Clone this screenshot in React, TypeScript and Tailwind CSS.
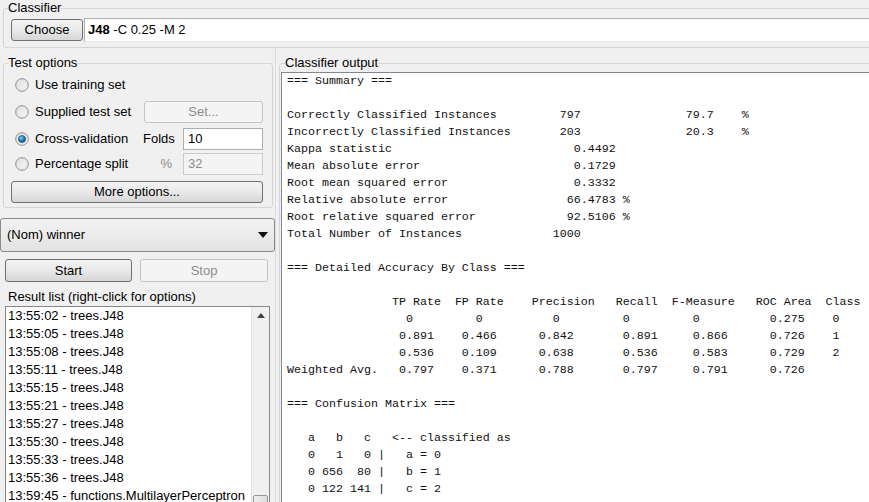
import React from "react";

const sans = "font-['Liberation_Sans',Arial,sans-serif]";

function col(parts: [number, string][]) {
  let s = "";
  for (const [c, t] of parts) s = s.padEnd(c, " ") + t;
  return s;
}

const outputLines = [
  "=== Summary ===",
  "",
  col([[0, "Correctly Classified Instances"], [39, "797"], [57, "79.7"], [65, "%"]]),
  col([[0, "Incorrectly Classified Instances"], [39, "203"], [57, "20.3"], [65, "%"]]),
  col([[0, "Kappa statistic"], [41, "0.4492"]]),
  col([[0, "Mean absolute error"], [41, "0.1729"]]),
  col([[0, "Root mean squared error"], [41, "0.3332"]]),
  col([[0, "Relative absolute error"], [40, "66.4783 %"]]),
  col([[0, "Root relative squared error"], [40, "92.5106 %"]]),
  col([[0, "Total Number of Instances"], [38, "1000"]]),
  "",
  "=== Detailed Accuracy By Class ===",
  "",
  col([[15, "TP Rate"], [24, "FP Rate"], [35, "Precision"], [47, "Recall"], [55, "F-Measure"], [67, "ROC Area"], [77, "Class"]]),
  col([[17, "0"], [27, "0"], [38, "0"], [48, "0"], [58, "0"], [69, "0.275"], [78, "0"]]),
  col([[16, "0.891"], [25, "0.466"], [36, "0.842"], [48, "0.891"], [58, "0.866"], [69, "0.726"], [78, "1"]]),
  col([[16, "0.536"], [25, "0.109"], [36, "0.638"], [48, "0.536"], [58, "0.583"], [69, "0.729"], [78, "2"]]),
  col([[0, "Weighted Avg."], [16, "0.797"], [25, "0.371"], [36, "0.788"], [48, "0.797"], [58, "0.791"], [69, "0.726"]]),
  "",
  "=== Confusion Matrix ===",
  "",
  "   a   b   c   <-- classified as",
  "   0   1   0 |   a = 0",
  "   0 656  80 |   b = 1",
  "   0 122 141 |   c = 2",
];

const results = [
  "13:55:02 - trees.J48",
  "13:55:05 - trees.J48",
  "13:55:08 - trees.J48",
  "13:55:11 - trees.J48",
  "13:55:15 - trees.J48",
  "13:55:21 - trees.J48",
  "13:55:27 - trees.J48",
  "13:55:30 - trees.J48",
  "13:55:33 - trees.J48",
  "13:55:36 - trees.J48",
  "13:59:45 - functions.MultilayerPerceptron",
];

function Radio({ checked }: { checked?: boolean }) {
  return (
    <svg width="14" height="14" viewBox="0 0 14 14" className="shrink-0">
      <defs>
        <linearGradient id="rb" x1="0" y1="0" x2="1" y2="1">
          <stop offset="0" stopColor="#dcdcdc" />
          <stop offset="1" stopColor="#fbfbfb" />
        </linearGradient>
        <radialGradient id="rd" cx="0.4" cy="0.35" r="0.7">
          <stop offset="0" stopColor="#8fd3f5" />
          <stop offset="0.45" stopColor="#2a8ac4" />
          <stop offset="1" stopColor="#0e4670" />
        </radialGradient>
      </defs>
      <circle cx="7" cy="7" r="6.3" fill="url(#rb)" stroke="#8e8f8f" strokeWidth="1" />
      <circle cx="7" cy="7" r="4.6" fill="none" stroke="#e6e6e6" strokeWidth="1" />
      {checked && <circle cx="7" cy="7" r="3.6" fill="url(#rd)" stroke="#1f4f73" strokeWidth="0.6" />}
    </svg>
  );
}

function Button({ children, disabled, className = "" }: { children: React.ReactNode; disabled?: boolean; className?: string }) {
  return (
    <div
      className={
        "flex items-center justify-center rounded-[3px] border " +
        (disabled
          ? "border-[#c2c5c7] bg-[#f4f4f4] text-[#8d8d8d] "
          : "border-[#707070] bg-linear-to-b from-[#f3f3f3] via-[#e9e9e9] to-[#d6d6d6] text-black ") +
        className
      }
    >
      {children}
    </div>
  );
}

export default function App() {
  return (
    <div className={`flex h-[502px] w-[869px] flex-col overflow-hidden bg-[#f0f0f0] text-[13px] text-black ${sans}`}>
      {/* Classifier */}
      <fieldset className="ml-[3px] mr-[-12px] min-w-0 rounded-[3px] border border-[#d5d5d5]">
        <legend className="ml-[4px] leading-[16px]">Classifier</legend>
        <div className="flex h-[24px] items-center gap-[1px] pb-0 pl-[7px] pt-0 mt-[2px] mb-[5px]">
          <Button className="h-[22px] w-[72px]">Choose</Button>
          <div className="flex h-[24px] flex-1 items-center border border-[#abadb3] border-b-[#e3e9ef] bg-white pl-[3px]">
            <span className="font-bold">J48</span>
            <span>&nbsp;-C 0.25 -M 2</span>
          </div>
        </div>
      </fieldset>

      <div className="flex flex-1">
        {/* Left column */}
        <div className="flex w-[275px] shrink-0 flex-col">
          <fieldset className="ml-[3px] mr-[2px] mt-[7px] min-w-0 rounded-[3px] border border-[#d5d5d5]">
            <legend className="ml-[4px] leading-[16px]">Test options</legend>
            <div className="pb-[4px] pl-[7px] pr-[9px] pt-[3px]">
              <div className="flex h-[22px] items-center gap-[6px] pl-[4px]">
                <Radio />
                <span>Use training set</span>
              </div>
              <div className="mt-[5px] flex h-[22px] items-center">
                <div className="flex w-[133px] items-center gap-[6px] pl-[4px]">
                  <Radio />
                  <span>Supplied test set</span>
                </div>
                <Button disabled className="h-[22px] flex-1">Set...</Button>
              </div>
              <div className="mt-[5px] flex h-[22px] items-center">
                <div className="flex w-[132px] items-center gap-[6px] pl-[4px]">
                  <Radio checked />
                  <span>Cross-validation</span>
                </div>
                <span className="w-[40px] pr-[9px] text-right">Folds</span>
                <div className="flex h-[22px] flex-1 items-center border border-[#abadb3] bg-white pl-[4px]">10</div>
              </div>
              <div className="mt-[3px] flex h-[22px] items-center">
                <div className="flex w-[132px] items-center gap-[6px] pl-[4px]">
                  <Radio />
                  <span>Percentage split</span>
                </div>
                <span className="w-[40px] pr-[11px] text-right text-[#8d8d8d]">%</span>
                <div className="flex h-[22px] flex-1 items-center border border-[#c9cbcf] bg-[#f4f4f4] pl-[4px] text-[#8d8d8d]">32</div>
              </div>
              <Button className="mt-[6px] h-[22px]">More options...</Button>
            </div>
          </fieldset>

          {/* Class attribute */}
          <div className="mt-[10px] flex h-[34px] items-center justify-between rounded-[3px] border border-[#8a8a8a] bg-linear-to-b from-[#f2f2f2] to-[#e4e4e4] pl-[6px] pr-[6px]">
            <span>(Nom) winner</span>
            <svg width="10" height="6" viewBox="0 0 10 6">
              <path d="M0 0 H10 L5 6 Z" fill="#111" />
            </svg>
          </div>

          <div className="mt-[7px] flex gap-[8px] pl-[5px] pr-[6px]">
            <Button className="h-[23px] w-[127px]">Start</Button>
            <Button disabled className="h-[23px] w-[128px]">Stop</Button>
          </div>

          <div className="mt-[7px] pl-[8px] leading-[16px]">Result list (right-click for options)</div>
          <div className="ml-[5px] mr-[5px] mt-[1px] flex flex-1 overflow-hidden border border-[#828790] bg-white">
            <div className="flex-1 overflow-hidden whitespace-nowrap pl-[2px] leading-[18px]">
              {results.map((r) => (
                <div key={r}>{r}</div>
              ))}
            </div>
            <div className="flex w-[18px] shrink-0 flex-col border-l border-[#e2e2e2] bg-[#f0f0f0]">
              <div className="flex h-[17px] items-center justify-center">
                <svg width="8" height="5" viewBox="0 0 8 5">
                  <path d="M0 5 L4 0 L8 5 Z" fill="#404040" />
                </svg>
              </div>
              <div className="flex-1" />
              <div className="mx-[1px] h-[10px] rounded-t-[2px] border border-[#979797] bg-linear-to-r from-[#f0f0f0] to-[#dcdcdc]" />
            </div>
          </div>
        </div>

        {/* Split divider */}
        <div className="w-[3px] shrink-0 border-l border-[#dcdcdc]" />

        {/* Right column */}
        <fieldset className="ml-[1px] mr-[-12px] mt-[7px] flex min-w-0 flex-1 flex-col rounded-[3px] border border-[#d5d5d5] pt-[1px]">
          <legend className="ml-[5px] leading-[16px]">Classifier output</legend>
          <div className="ml-[1px] flex-1 overflow-hidden border border-[#828790] bg-white pl-[5px]">
            <pre className="font-['Liberation_Mono','Courier_New',monospace] text-[11.67px] leading-[17px] text-[#111]">
              {outputLines.join("\n")}
            </pre>
          </div>
        </fieldset>
      </div>
    </div>
  );
}
